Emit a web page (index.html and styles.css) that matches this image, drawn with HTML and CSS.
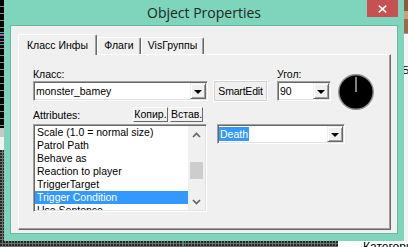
FILE: index.html
```html
<!DOCTYPE html>
<html lang="ru">
<head>
    <meta charset="UTF-8">
    <meta name="viewport" content="width=device-width, initial-scale=1.0">
    <title>Object Properties</title>
    <link rel="stylesheet" href="styles.css">
</head>
<body>
<div class="desk">
    <div class="side-left">
        <div class="ls-top"></div>
        <div class="ls-mid"></div>
        <div class="ls-bot"></div>
    </div>

    <div class="window">
        <div class="titlebar">
            <span class="title">Object Properties</span>
            <button class="close" title="Закрыть">
                <svg width="9" height="8" viewBox="0 0 9 8">
                    <path d="M0.8 0.6 L8.2 7.4 M8.2 0.6 L0.8 7.4" stroke="#fff" stroke-width="1.5" fill="none"/>
                </svg>
            </button>
        </div>

        <div class="client">
            <div class="tabs">
                <div class="tab active">Класс Инфы</div>
                <div class="tab tab-flags">Флаги</div>
                <div class="tab tab-vis">VisГруппы</div>
            </div>

            <div class="panel">
                <div class="row-top">
                    <div class="field class-field">
                        <label>Класс:</label>
                        <div class="combo">
                            <span class="val">monster_bamey</span>
                            <span class="drop"></span>
                        </div>
                    </div>
                    <button class="smart">SmartEdit</button>
                    <div class="field angle-field">
                        <label>Угол:</label>
                        <div class="combo">
                            <span class="val">90</span>
                            <span class="drop"></span>
                        </div>
                    </div>
                    <div class="dial">
                        <svg width="36" height="36" viewBox="0 0 36 36">
                            <circle cx="18" cy="18" r="17.2" fill="#000" stroke="#8c8c8c" stroke-width="1.4"/>
                            <line x1="18" y1="3" x2="18" y2="18" stroke="#fff" stroke-width="1"/>
                        </svg>
                    </div>
                </div>

                <div class="row-bottom">
                    <div class="attrs">
                        <div class="attrs-head">
                            <label>Attributes:</label>
                            <button class="mini copy">Копир.</button>
                            <button class="mini paste">Встав.</button>
                        </div>
                        <div class="listbox">
                            <ul class="items">
                                <li>Scale (1.0 = normal size)</li>
                                <li>Patrol Path</li>
                                <li>Behave as</li>
                                <li>Reaction to player</li>
                                <li>TriggerTarget</li>
                                <li class="sel">Trigger Condition</li>
                                <li>Use Sentence</li>
                            </ul>
                            <div class="scrollbar">
                                <div class="sb-btn">
                                    <svg width="9" height="6" viewBox="0 0 9 6"><polyline points="1,5 4.5,1.5 8,5" stroke="#606060" stroke-width="1.6" fill="none"/></svg>
                                </div>
                                <div class="sb-track"><div class="thumb"></div></div>
                                <div class="sb-btn">
                                    <svg width="9" height="6" viewBox="0 0 9 6"><polyline points="1,1 4.5,4.5 8,1" stroke="#606060" stroke-width="1.6" fill="none"/></svg>
                                </div>
                            </div>
                        </div>
                    </div>
                    <div class="combo value-combo">
                        <span class="val"><span class="hl">Death</span></span>
                        <span class="drop"></span>
                    </div>
                </div>
            </div>
        </div>
    </div>

    <div class="side-right">
        <div class="rs-a"></div>
        <div class="rs-b"></div>
        <div class="rs-c"></div>
        <div class="rs-text">Б</div>
    </div>

    <div class="bottom-strip">
        <div class="dots"><span class="tick"></span></div>
        <div class="other-app">Категории</div>
    </div>
</div>
</body>
</html>
```

FILE: styles.css
```css
* {
    box-sizing: border-box;
}
body {
    margin: 0;
    font-family: "Liberation Sans", Arial, sans-serif;
    font-size: 10.5px;
    color: #000;
    background: #fff;
}
button {
    font: inherit;
    color: #000;
    padding: 0;
    margin: 0;
}
.desk {
    display: grid;
    grid-template-columns: 4px 400px 4px;
    grid-template-rows: 241px 6px;
    width: 408px;
    height: 247px;
    overflow: hidden;
}

/* background around the dialog */
.side-left {
    display: flex;
    flex-direction: column;
}
.ls-top {
    height: 128px;
    background:
        linear-gradient(to bottom, transparent 32px, #3bb0d8 32px 33px, transparent 33px 35px, #c040a0 35px 36px, transparent 36px 38px, #3070d0 38px 39px, transparent 39px 44px, #30a0a0 44px 45px, transparent 45px),
        repeating-linear-gradient(to bottom, #050505 0 6px, #8a8a8a 6px 7px);
}
.ls-mid {
    height: 22px;
    background: linear-gradient(to bottom, #c8c8c8 0 9px, #f2f2f2 9px);
}
.ls-bot,
.dots {
    flex: 1;
    background: radial-gradient(circle at 1px 1px, #262626 0.8px, transparent 1.1px) 0 0 / 3px 3px, #707070;
}
.side-right {
    display: flex;
    flex-direction: column;
    background: #f4f4f4;
    overflow: hidden;
}
.rs-a { height: 11px; background: #8d5b3b; }
.rs-b { height: 8px; background: #c8a27e; }
.rs-c { height: 15px; background: #9b6a48; border-bottom: 1px solid #9a9a9a; }
.rs-text {
    margin-top: 30px;
    margin-left: -2px;
    font-size: 11px;
    line-height: 13px;
}
.bottom-strip {
    grid-column: 1 / -1;
    display: flex;
}
.dots {
    flex: 0 0 338px;
    display: flex;
}
.tick {
    margin-left: 183px;
    width: 1px;
    background: #2f8f8f;
}
.other-app {
    flex: 1;
    background: #fff;
    padding-left: 25px;
    font-size: 12px;
    line-height: 12px;
    white-space: nowrap;
    overflow: hidden;
}

/* window frame */
.window {
    background: #7fd4bc;
    display: flex;
    flex-direction: column;
    padding: 0 6px 7px 6px;
}
.titlebar {
    height: 25px;
    display: grid;
    grid-template-columns: 1fr auto 1fr;
    align-items: center;
}
.title {
    grid-column: 2;
    font-family: "Open Sans", sans-serif;
    font-size: 14px;
    line-height: 25px;
    color: #1b2723;
}
.close {
    grid-column: 3;
    justify-self: end;
    align-self: start;
    width: 31px;
    height: 17px;
    border: none;
    background-color: #c75050;
    display: flex;
    align-items: center;
    justify-content: center;
}
.client {
    flex: 1;
    display: flex;
    flex-direction: column;
    background-color: #f0f0f0;
    border: 1px solid #67b8a2;
    padding: 8px 6px 3px 7px;
}

/* tabs */
.tabs {
    display: flex;
    align-items: flex-end;
    height: 20px;
    position: relative;
    z-index: 1;
}
.tab {
    height: 17px;
    line-height: 15px;
    text-align: center;
    background-color: #f0f0f0;
    border: 1px solid;
    border-color: #fff #696969 transparent #fff;
    border-bottom: none;
    border-radius: 2px 2px 0 0;
    box-shadow: inset -1px 0 0 #a0a0a0;
    white-space: nowrap;
}
.tab.active {
    width: 79px;
    height: 21px;
    line-height: 20px;
    margin-bottom: -1px;
}
.tab-flags { width: 44px; }
.tab-vis { width: 63px; }
.panel {
    flex: 1;
    border: 1px solid;
    border-color: #fff #696969 #696969 #fff;
    box-shadow: inset -1px -1px 0 #a0a0a0;
    padding: 13px 0 0 14px;
}

/* top row */
.row-top {
    display: flex;
    align-items: flex-start;
    height: 39px;
}
.field {
    display: flex;
    flex-direction: column;
}
.field label {
    line-height: 13px;
}
.class-field { width: 175px; }
.angle-field { width: 54px; margin-left: 9px; }
.smart {
    width: 55px;
    height: 22px;
    margin-left: 5px;
    margin-top: 12px;
    background-color: #f0f0f0;
    border: 1px solid #fff;
    box-shadow: inset 0 0 0 1px #d2d2d2;
    letter-spacing: -0.2px;
}
.dial {
    width: 36px;
    height: 36px;
    margin-left: 7px;
    margin-top: 6px;
}
.dial svg {
    display: block;
}

/* combo boxes */
.combo {
    display: flex;
    align-items: center;
    height: 20px;
    background-color: #fff;
    border: 1px solid;
    border-color: #a0a0a0 #fff #fff #a0a0a0;
    box-shadow: inset 1px 1px 0 #696969, inset -1px -1px 0 #e3e3e3;
    padding: 1px;
}
.val {
    flex: 1;
    padding-left: 1px;
    line-height: 16px;
    white-space: nowrap;
    overflow: hidden;
}
.drop {
    width: 16px;
    height: 16px;
    display: flex;
    align-items: center;
    justify-content: center;
    background-color: #f0f0f0;
    border: 1px solid;
    border-color: #f0f0f0 #696969 #696969 #f0f0f0;
    box-shadow: inset 1px 1px 0 #fff, inset -1px -1px 0 #a0a0a0;
}
.drop::after {
    content: "";
    border-left: 4px solid transparent;
    border-right: 4px solid transparent;
    border-top: 4px solid #000;
    margin-top: 1px;
}
.hl {
    background-color: #3399ff;
    color: #fff;
    padding: 1px 1px;
    margin-left: -1px;
}

/* bottom row */
.row-bottom {
    display: flex;
    align-items: flex-start;
}
.attrs {
    width: 174px;
}
.attrs-head {
    display: flex;
    align-items: center;
    height: 15px;
    gap: 2px;
    padding-right: 4px;
}
.attrs-head label {
    flex: 1;
}
.mini {
    height: 15px;
    line-height: 13px;
    background-color: #f0f0f0;
    border: 1px solid;
    border-color: #fff #696969 #696969 #fff;
}
.copy { width: 35px; }
.paste { width: 33px; }
.listbox {
    display: flex;
    height: 88px;
    margin-top: 2px;
    background-color: #fff;
    border: 1px solid;
    border-color: #a0a0a0 #fff #fff #a0a0a0;
    box-shadow: inset 1px 1px 0 #696969, inset -1px -1px 0 #e3e3e3;
    padding: 1px;
}
.items {
    flex: 1;
    margin: 0;
    padding: 0;
    list-style: none;
    overflow: hidden;
}
.items li {
    line-height: 13px;
    padding-left: 2px;
    white-space: nowrap;
}
.items li.sel {
    background-color: #3399ff;
    color: #fff;
}
.scrollbar {
    width: 17px;
    display: flex;
    flex-direction: column;
    background-color: #f0f0f0;
}
.sb-btn {
    height: 17px;
    display: flex;
    align-items: center;
    justify-content: center;
}
.sb-track {
    flex: 1;
}
.thumb {
    height: 17px;
    margin: 19px 2px 0;
    background-color: #cdcdcd;
}
.value-combo {
    width: 128px;
    margin-left: 10px;
    margin-top: 17px;
}
```
